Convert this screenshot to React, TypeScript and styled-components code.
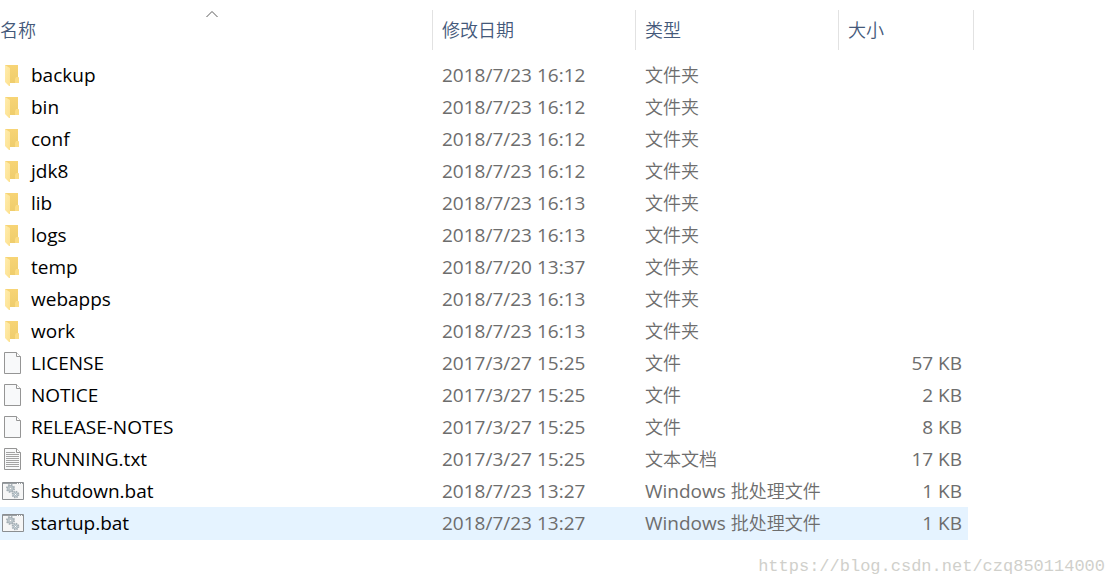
import React from "react";
import styled, { createGlobalStyle, css } from "styled-components";

const GlobalStyle = createGlobalStyle`
  *, *::before, *::after { box-sizing: border-box; }
  body {
    margin: 0;
    background: #fff;
    font-family: "Open Sans", "Noto Sans CJK SC", sans-serif;
  }
`;

const latin = css`
  font-family: "Open Sans", "Noto Sans", sans-serif;
  font-size: 19px;
`;

const cjk = css`
  font-family: "Noto Sans CJK SC", sans-serif;
  font-weight: 350;
  font-size: 18px;
`;

const Page = styled.main`
  padding-top: 10px;
`;

const ListArea = styled.div`
  padding-right: 141px;
`;

const FileTable = styled.table`
  width: 100%;
  table-layout: fixed;
  border-collapse: collapse;
`;

const Column = styled.col<{ $width?: number }>`
  width: ${({ $width }) => ($width ? `${$width}px` : "auto")};
`;

const HeaderCell = styled.th`
  position: relative;
  padding: 0 0 9px;
  text-align: left;
`;

const HeaderButton = styled.button<{ $flush?: boolean }>`
  display: block;
  width: 100%;
  height: 40px;
  padding: 0 0 2px ${({ $flush }) => ($flush ? 0 : 9)}px;
  border: 0;
  border-right: 1px solid #e2e2e2;
  background: none;
  color: #44597a;
  text-align: left;
  line-height: 38px;
  ${cjk}
`;

const SortArrow = styled.svg`
  position: absolute;
  top: 0;
  left: calc(50% - 12px);
  width: 14px;
  height: 8px;
`;

const Row = styled.tr<{ $selected?: boolean }>`
  height: 32px;
  ${({ $selected }) =>
    $selected &&
    css`
      td:not(:last-child) {
        background: #e5f3ff;
        box-shadow: 0 1px #e5f3ff;
      }
    `}
`;

const Cell = styled.td<{ $align?: "right" }>`
  height: 32px;
  padding: 0 ${({ $align }) => ($align === "right" ? 6 : 0)}px 0 9px;
  color: #6d6d6d;
  text-align: ${({ $align }) => $align ?? "left"};
  vertical-align: middle;
  line-height: 24px;
  white-space: nowrap;
  ${latin}
`;

const NameCell = styled(Cell)`
  padding: 0;
  color: #000;
`;

const NameLayout = styled.div`
  display: flex;
  align-items: center;
  gap: 7px;
  height: 32px;
`;

const Icon = styled.svg`
  flex: none;
  width: 24px;
  height: 32px;
`;

const Cjk = styled.span`
  line-height: 0;
  ${cjk}
`;

const Watermark = styled.p`
  margin: 16px 10px 0 0;
  color: #d0d0cb;
  font-family: "Liberation Mono", monospace;
  font-size: 17px;
  line-height: 24px;
  text-align: right;
`;

type Kind = "folder" | "file" | "text" | "batch";

function FolderIcon() {
  return (
    <Icon viewBox="0 0 24 32" aria-hidden="true">
      <defs>
        <linearGradient id="folderBack" x1="0" y1="0" x2="0" y2="1">
          <stop offset="0" stopColor="#f7d475" />
          <stop offset="1" stopColor="#efcd6c" />
        </linearGradient>
        <linearGradient id="folderFlap" x1="0" y1="0" x2="1" y2="1">
          <stop offset="0" stopColor="#ffecad" />
          <stop offset="1" stopColor="#fde18f" />
        </linearGradient>
      </defs>
      <path d="M5 6H18V18L19 19V24H9L5 20Z" fill="url(#folderBack)" />
      <path d="M15 24V20L16 18H18L19 19V24Z" fill="#fbdc84" />
      <path d="M5 6L10 9V27H9L5 23Z" fill="url(#folderFlap)" />
    </Icon>
  );
}

function DocumentIcon({ lines }: { lines?: boolean }) {
  return (
    <Icon viewBox="0 0 24 32" aria-hidden="true">
      <path d="M4.5 5.5H16.5L20.5 9.5V26.5H4.5Z" fill="#f8f9fa" stroke="#959595" />
      <path d="M16.5 5.5V9.5H20.5" fill="#fff" stroke="#959595" />
      {lines && (
        <path
          d="M6 9.5H15M6 11.5H19M6 13.5H19M6 15.5H19M6 17.5H19M6 19.5H19M6 21.5H19M6 23.5H19"
          stroke="#a3a3a3"
        />
      )}
    </Icon>
  );
}

function BatchIcon() {
  return (
    <Icon viewBox="0 0 24 32" aria-hidden="true">
      <path d="M2.5 7.5H23.5V24.5H2.5Z" fill="#f6f6f6" stroke="#8b8e91" />
      <path d="M3 8.5H23" stroke="#9a9fa3" />
      <path d="M17 8.5H18M19 8.5H20M21 8.5H22" stroke="#fff" />
      <circle cx="10.5" cy="13.5" r="3.5" fill="#d3dade" stroke="#a3adb3" strokeWidth="2" strokeDasharray="1.5 1.25" />
      <circle cx="10.5" cy="13.5" r="2.8" fill="#cdd5d9" stroke="#a6b0b6" />
      <circle cx="10.5" cy="13.5" r="1.2" fill="#fff" stroke="#87939a" strokeWidth=".6" />
      <circle cx="15.5" cy="19.5" r="3" fill="#d3dade" stroke="#a3adb3" strokeWidth="1.7" strokeDasharray="1.3 1.06" />
      <circle cx="15.5" cy="19.5" r="2.3" fill="#d6e3e9" stroke="#a6b0b6" strokeWidth=".8" />
      <circle cx="15.5" cy="19.5" r="1" fill="#fff" stroke="#87939a" strokeWidth=".6" />
    </Icon>
  );
}

function KindIcon({ kind }: { kind: Kind }) {
  if (kind === "folder") return <FolderIcon />;
  if (kind === "batch") return <BatchIcon />;
  return <DocumentIcon lines={kind === "text"} />;
}

const kindLabels: Record<Kind, React.ReactNode> = {
  folder: <Cjk>文件夹</Cjk>,
  file: <Cjk>文件</Cjk>,
  text: <Cjk>文本文档</Cjk>,
  batch: (
    <>
      Windows <Cjk>批处理文件</Cjk>
    </>
  ),
};

interface Entry {
  name: string;
  modified: string;
  kind: Kind;
  size?: string;
  selected?: boolean;
}

const entries: Entry[] = [
  { name: "backup", modified: "2018/7/23 16:12", kind: "folder" },
  { name: "bin", modified: "2018/7/23 16:12", kind: "folder" },
  { name: "conf", modified: "2018/7/23 16:12", kind: "folder" },
  { name: "jdk8", modified: "2018/7/23 16:12", kind: "folder" },
  { name: "lib", modified: "2018/7/23 16:13", kind: "folder" },
  { name: "logs", modified: "2018/7/23 16:13", kind: "folder" },
  { name: "temp", modified: "2018/7/20 13:37", kind: "folder" },
  { name: "webapps", modified: "2018/7/23 16:13", kind: "folder" },
  { name: "work", modified: "2018/7/23 16:13", kind: "folder" },
  { name: "LICENSE", modified: "2017/3/27 15:25", kind: "file", size: "57 KB" },
  { name: "NOTICE", modified: "2017/3/27 15:25", kind: "file", size: "2 KB" },
  { name: "RELEASE-NOTES", modified: "2017/3/27 15:25", kind: "file", size: "8 KB" },
  { name: "RUNNING.txt", modified: "2017/3/27 15:25", kind: "text", size: "17 KB" },
  { name: "shutdown.bat", modified: "2018/7/23 13:27", kind: "batch", size: "1 KB" },
  { name: "startup.bat", modified: "2018/7/23 13:27", kind: "batch", size: "1 KB", selected: true },
];

export default function App() {
  return (
    <Page>
      <GlobalStyle />
      <ListArea>
        <FileTable>
          <colgroup>
            <Column />
            <Column $width={203} />
            <Column $width={203} />
            <Column $width={129} />
            <Column $width={6} />
          </colgroup>
          <thead>
            <tr>
              <HeaderCell scope="col" aria-sort="ascending">
                <HeaderButton type="button" $flush>名称</HeaderButton>
                <SortArrow viewBox="0 0 14 8" aria-hidden="true">
                  <path d="M1.5 7L7 1.5L12.5 7" fill="none" stroke="#5c5c5c" />
                </SortArrow>
              </HeaderCell>
              <HeaderCell scope="col">
                <HeaderButton type="button">修改日期</HeaderButton>
              </HeaderCell>
              <HeaderCell scope="col">
                <HeaderButton type="button">类型</HeaderButton>
              </HeaderCell>
              <HeaderCell scope="col" colSpan={2}>
                <HeaderButton type="button">大小</HeaderButton>
              </HeaderCell>
            </tr>
          </thead>
          <tbody>
            {entries.map((entry) => (
              <Row key={entry.name} $selected={entry.selected}>
                <NameCell>
                  <NameLayout>
                    <KindIcon kind={entry.kind} />
                    {entry.name}
                  </NameLayout>
                </NameCell>
                <Cell>{entry.modified}</Cell>
                <Cell>{kindLabels[entry.kind]}</Cell>
                <Cell $align="right">{entry.size}</Cell>
                <td />
              </Row>
            ))}
          </tbody>
        </FileTable>
      </ListArea>
      <Watermark>https://blog.csdn.net/czq850114000</Watermark>
    </Page>
  );
}
